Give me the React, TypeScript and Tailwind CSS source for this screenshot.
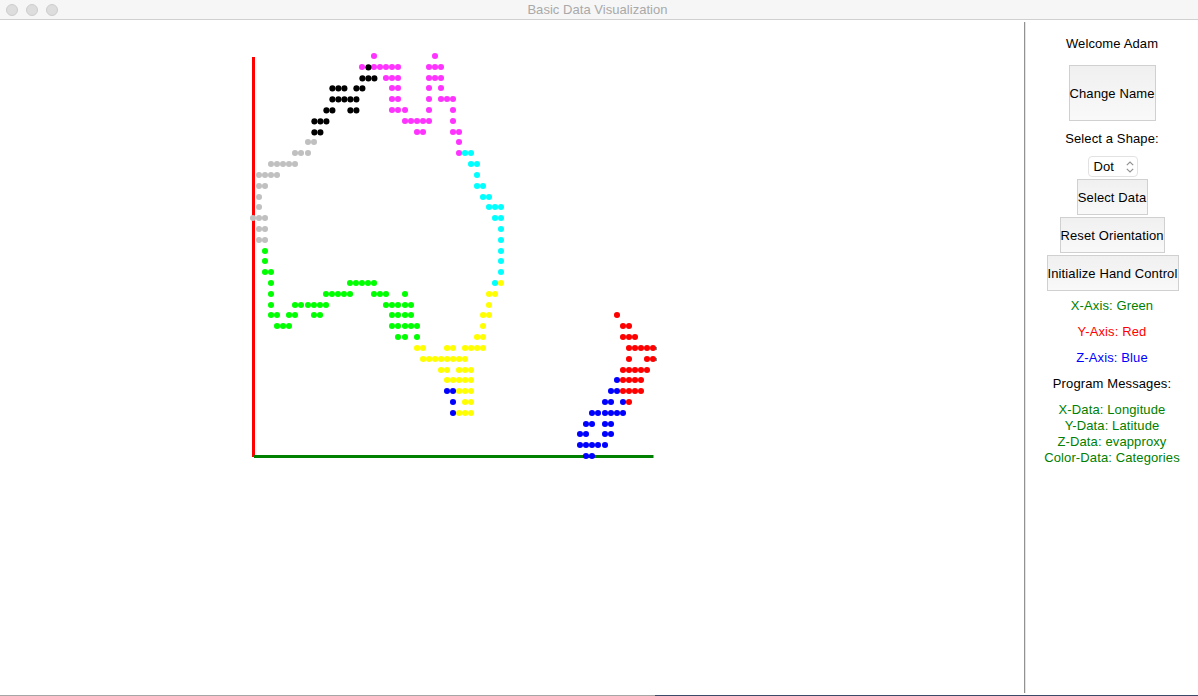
import React from "react";

type Row = [y: number, xs: number[]];
type Series = { color: string; rows: Row[] };

const series: Series[] = [
  {
    color: "#ff33ff",
    rows: [
      [56, [374, 435]],
      [67, [362, 374, 380, 386, 392, 398, 429, 435, 441]],
      [78, [386, 392, 398, 429, 435, 441]],
      [88, [392, 398, 429, 441]],
      [99, [392, 398, 429, 441, 447, 453]],
      [110, [392, 398, 405, 429, 453]],
      [121, [405, 411, 417, 423, 429, 453]],
      [132, [417, 423, 453, 459]],
      [142, [459]],
      [153, [459]],
    ],
  },
  {
    color: "#000000",
    rows: [
      [67.4, [368.4]],
      [78.4, [362.4, 368.4, 374.4]],
      [88.4, [332.4, 338.4, 344.4, 356.4, 362.4]],
      [99.4, [332.4, 338.4, 344.4, 350.4, 356.4]],
      [110.4, [326.4, 332.4, 350.4, 356.4]],
      [121.4, [314.4, 320.4, 326.4]],
      [132.4, [314.4, 320.4]],
    ],
  },
  {
    color: "#c0c0c0",
    rows: [
      [142, [308, 314]],
      [153, [295, 301, 308]],
      [164, [271, 277, 283, 289, 295]],
      [175, [259, 265, 271, 277]],
      [186, [259, 265]],
      [197, [259]],
      [207, [259]],
      [218, [253, 259, 265]],
      [229, [259, 265]],
      [240, [259, 265]],
    ],
  },
  {
    color: "#00ffff",
    rows: [
      [153, [465, 471]],
      [164, [471, 477]],
      [175, [477]],
      [186, [477, 483]],
      [197, [483, 489]],
      [207, [489, 495, 501]],
      [218, [495, 501]],
      [229, [501]],
      [240, [501]],
      [251, [501]],
      [261, [501]],
      [272, [501]],
      [283, [495]],
    ],
  },
  {
    color: "#00ff00",
    rows: [
      [251, [265]],
      [261, [265]],
      [272, [265, 271]],
      [283, [271, 350, 356, 362, 368, 374]],
      [294, [271, 326, 332, 338, 344, 350, 374, 380, 386, 405]],
      [305, [271, 295, 301, 308, 314, 320, 326, 386, 392, 398, 405, 411]],
      [315, [271, 277, 289, 295, 314, 320, 392, 398, 405, 411]],
      [326, [277, 283, 289, 392, 398, 405, 411, 417]],
      [337, [398, 405, 417]],
    ],
  },
  {
    color: "#ffff00",
    rows: [
      [283, [501]],
      [294, [489, 495]],
      [305, [489]],
      [315, [483, 489]],
      [326, [483]],
      [337, [477, 483]],
      [348, [417, 423, 447, 453, 465, 471, 477, 483]],
      [359, [423, 429, 435, 441, 447, 453, 459, 465]],
      [370, [441, 447, 459, 465, 471]],
      [380, [447, 453, 459, 465, 471]],
      [391, [459, 465, 471]],
      [402, [465, 471]],
      [413, [459, 465, 471]],
    ],
  },
  {
    color: "#ff0000",
    rows: [
      [315, [617]],
      [326, [623, 629]],
      [337, [623, 629, 635]],
      [348, [629, 635, 641, 647, 653]],
      [359, [629, 647, 653]],
      [370, [623, 629, 635, 641, 647]],
      [380, [623, 629, 635, 641]],
      [391, [623, 629, 635, 641]],
      [402, [629]],
    ],
  },
  {
    color: "#0000ff",
    rows: [
      [380, [617]],
      [391, [447, 453, 611, 617]],
      [402, [453, 605, 611, 623]],
      [413, [453, 592, 598, 605, 611, 617, 623]],
      [424, [586, 592, 605, 611]],
      [434, [580, 586, 605, 611]],
      [445, [580, 586, 592, 598, 605]],
      [456, [586, 592]],
    ],
  },
];

function Plot() {
  return (
    <svg className="block shrink-0" width="1024" height="675" viewBox="0 20 1024 675">
      <rect x="252" y="57" width="3" height="400" fill="#ff0000" />
      <rect x="254" y="455" width="399.5" height="3" fill="#008000" />
      <rect x="655" y="347" width="2" height="3" fill="#8a8a8a" />
      <rect x="655" y="358" width="2" height="3" fill="#8a8a8a" />
      {series.map((s) => (
        <g key={s.color} fill={s.color}>
          {s.rows.map(([y, xs]) => xs.map((x) => <circle key={`${x}-${y}`} cx={x} cy={y} r="3.05" />))}
        </g>
      ))}
    </svg>
  );
}

function PanelButton({ className, children }: { className: string; children: React.ReactNode }) {
  return (
    <button
      className={`flex shrink-0 items-center justify-center whitespace-nowrap border border-[#d0d0d0] bg-linear-to-b from-[#f0f0f0] to-[#f9f9f9] pt-0.5 ${className}`}
    >
      {children}
    </button>
  );
}

export default function App() {
  return (
    <div className="flex h-[696px] w-[1198px] flex-col overflow-hidden bg-white font-['Liberation_Sans',Arial,sans-serif] text-[13px] leading-4 text-black">
      <header className="grid h-5 shrink-0 grid-cols-[1fr_auto_1fr] items-center border-b border-[#d0d0d0] bg-[#f6f6f6]">
        <div className="flex gap-2 pl-1.5">
          <span className="size-3 rounded-full border border-[#cdcdcd] bg-[#dddddd]" />
          <span className="size-3 rounded-full border border-[#cdcdcd] bg-[#dddddd]" />
          <span className="size-3 rounded-full border border-[#cdcdcd] bg-[#dddddd]" />
        </div>
        <h1 className="pr-[3px] text-center whitespace-nowrap tracking-[0.04px] text-[#a9a9a9]">Basic Data Visualization</h1>
      </header>
      <main className="flex h-[675px] shrink-0">
        <Plot />
        <aside className="mt-0.5 flex h-[671px] w-[174px] flex-col items-center border-l border-[#929292] pt-3.5 pl-px tracking-[0.12px] shadow-[inset_1px_0_0_#e4e4e4]">
          <p>Welcome Adam</p>
          <PanelButton className="mt-[13px] h-14 w-[87px]">Change Name</PanelButton>
          <p className="mt-2.5">Select a Shape:</p>
          <button className="mt-[9px] ml-px flex h-[21px] w-[50px] shrink-0 items-center justify-between rounded-[4px] border border-[#e2e2e2] bg-white pr-[3px] pl-[5px]">
            <span>Dot</span>
            <svg width="8" height="12" viewBox="0 0 8 12" fill="none" stroke="#929292" strokeWidth="1.2">
              <path d="M0.8 4.2 L4 1 L7.2 4.2 M0.8 7.8 L4 11 L7.2 7.8" />
            </svg>
          </button>
          <div className="mt-0.5 flex flex-col items-center gap-0.5">
            <PanelButton className="h-9 w-[71px]">Select Data</PanelButton>
            <PanelButton className="h-9 w-[105px]">Reset Orientation</PanelButton>
            <PanelButton className="ml-px h-9 w-[132px]">Initialize Hand Control</PanelButton>
          </div>
          <div className="mt-[7px] flex flex-col items-center gap-2.5">
            <p className="text-[#008000]">X-Axis: Green</p>
            <p className="text-[#ff0000]">Y-Axis: Red</p>
            <p className="text-[#0000ff]">Z-Axis: Blue</p>
            <p>Program Messages:</p>
            <div className="text-center whitespace-nowrap text-[#008000]">
              <p>X-Data: Longitude</p>
              <p>Y-Data: Latitude</p>
              <p>Z-Data: evapproxy</p>
              <p>Color-Data: Categories</p>
            </div>
          </div>
        </aside>
      </main>
      <footer className="flex h-px shrink-0 bg-[#3b4a68]">
        <div className="w-[655px] bg-[#a6a6a6]" />
      </footer>
    </div>
  );
}
